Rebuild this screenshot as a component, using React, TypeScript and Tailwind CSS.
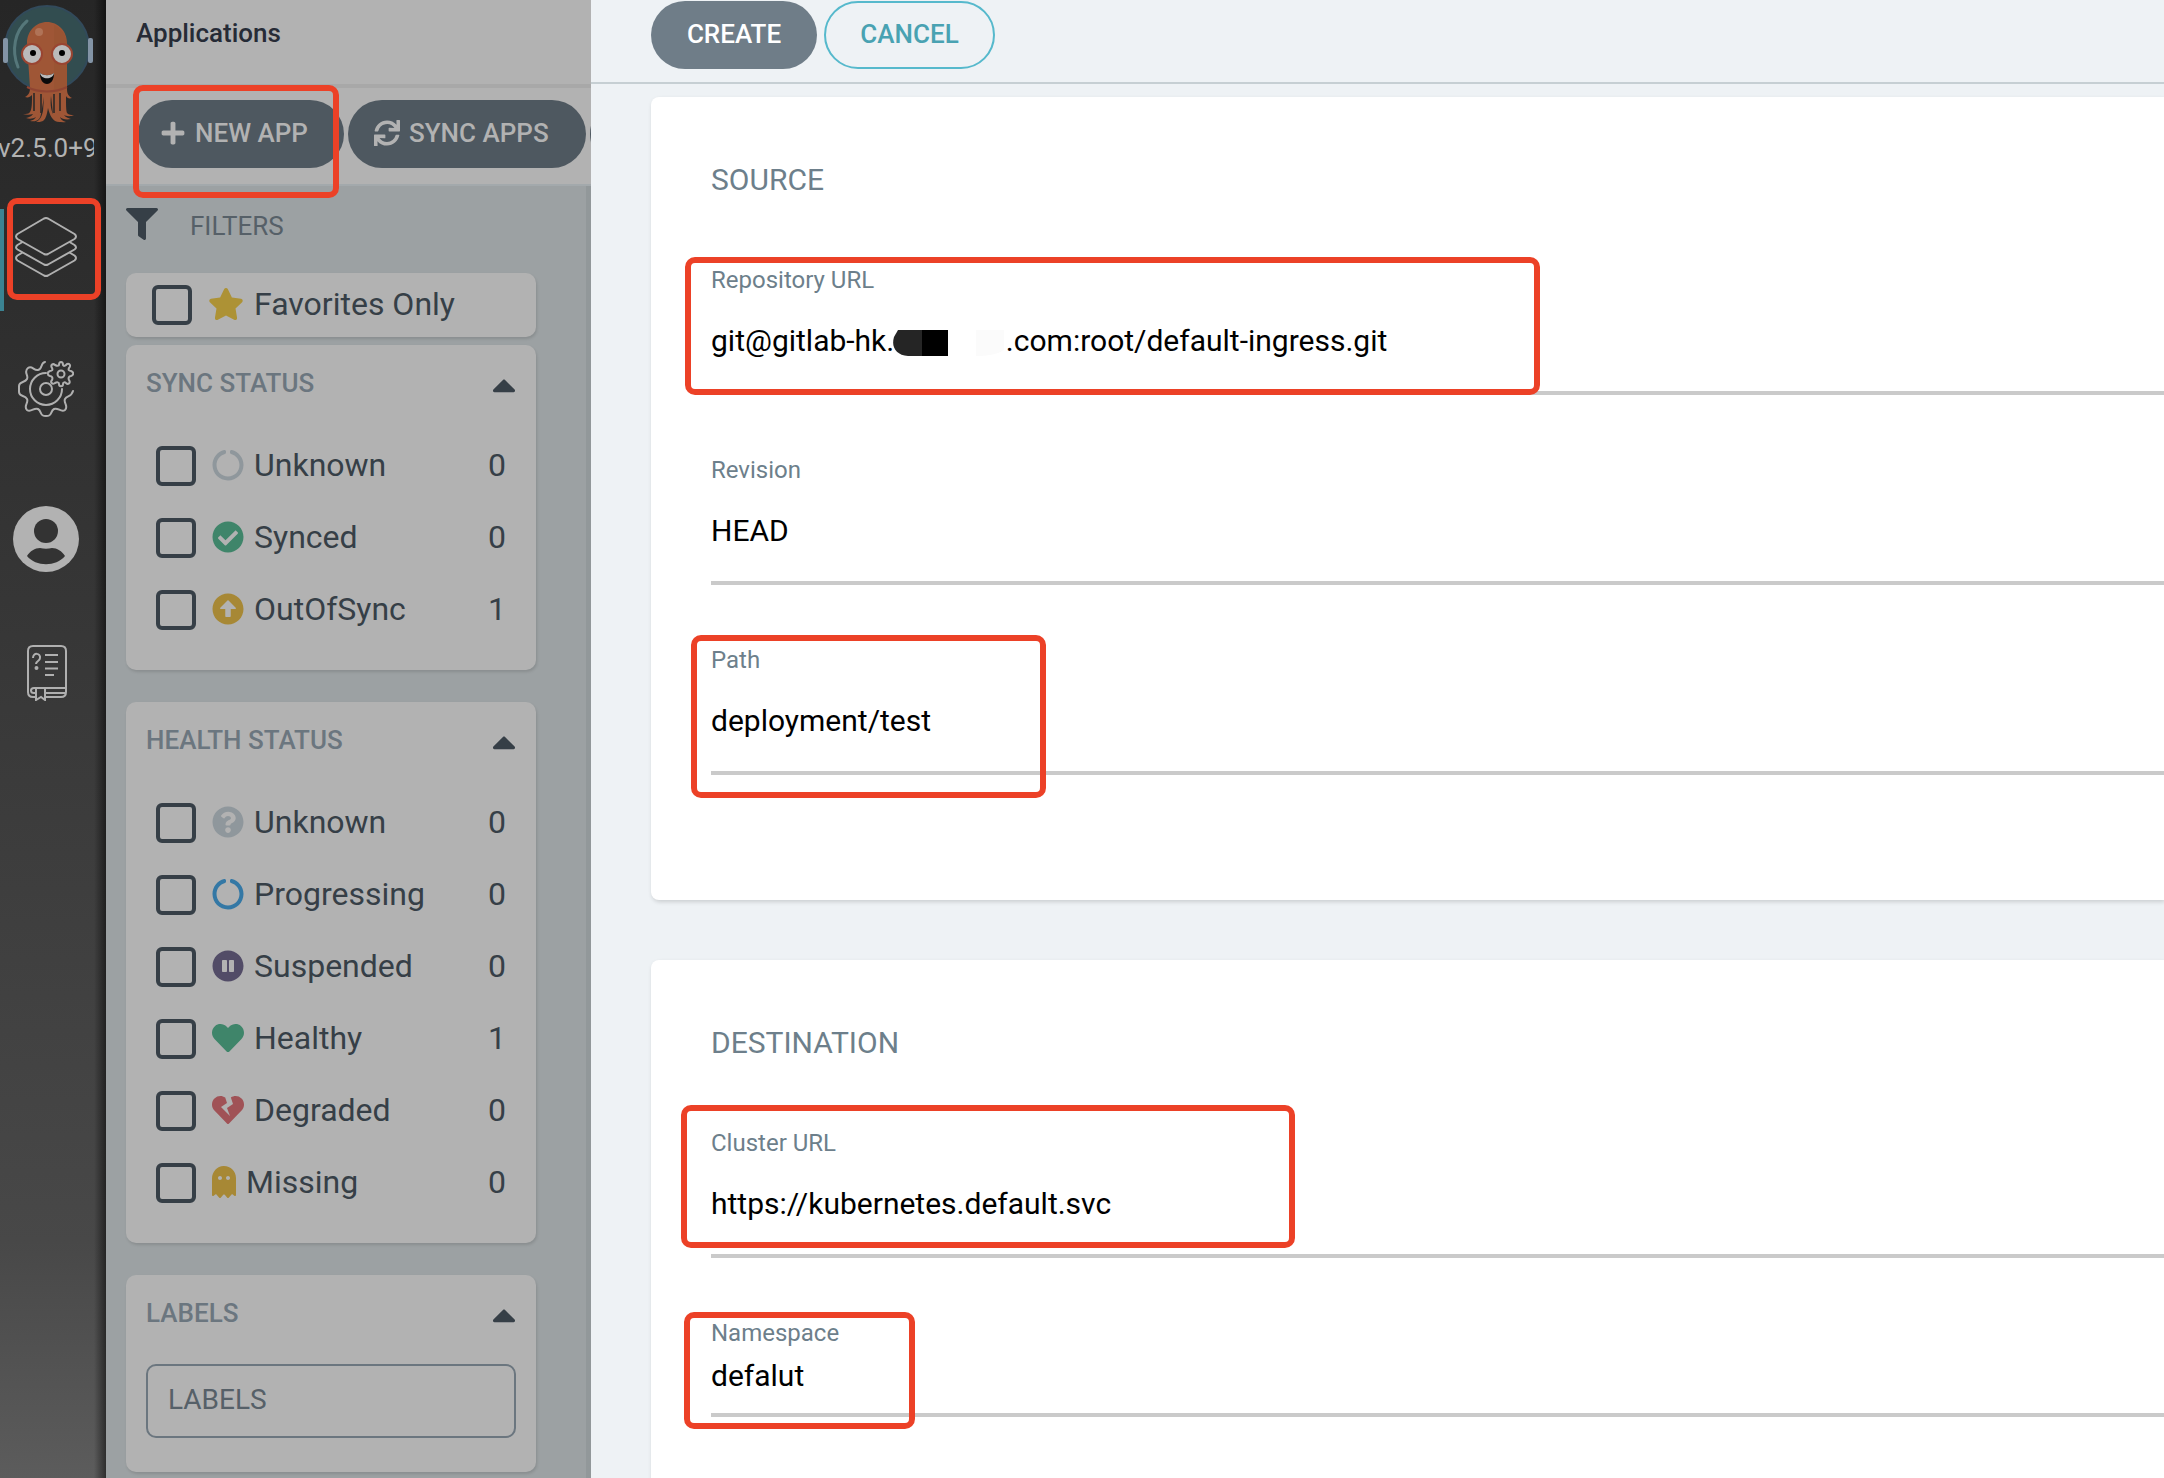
import { useState } from 'react';
import type { ReactNode } from 'react';
import {
    FaArrowAltCircleUp,
    FaCaretUp,
    FaCheckCircle,
    FaCircleNotch,
    FaFilter,
    FaGhost,
    FaHeart,
    FaHeartBroken,
    FaPauseCircle,
    FaPlus,
    FaQuestionCircle,
    FaStar,
    FaSync,
} from 'react-icons/fa';

interface FilterItem {
    name: string;
    count: number;
    icon: ReactNode;
}

const SYNC_ITEMS: FilterItem[] = [
    { name: 'Unknown', count: 0, icon: <FaCircleNotch className="text-[#8f979c]" /> },
    { name: 'Synced', count: 0, icon: <FaCheckCircle className="text-[#3f856a]" /> },
    { name: 'OutOfSync', count: 1, icon: <FaArrowAltCircleUp className="text-[#a78835]" /> },
];

const HEALTH_ITEMS: FilterItem[] = [
    { name: 'Unknown', count: 0, icon: <FaQuestionCircle className="text-[#8f979c]" /> },
    { name: 'Progressing', count: 0, icon: <FaCircleNotch className="text-[#3478a5]" /> },
    { name: 'Suspended', count: 0, icon: <FaPauseCircle className="text-[#524c67]" /> },
    { name: 'Healthy', count: 1, icon: <FaHeart className="text-[#3f856a]" /> },
    { name: 'Degraded', count: 0, icon: <FaHeartBroken className="text-[#a05256]" /> },
    { name: 'Missing', count: 0, icon: <FaGhost className="w-6 text-[#a78835]" /> },
];

const REPO_URL = `git@gitlab-hk.${'\u00a0'.repeat(15)}.com:root/default-ingress.git`;

function Mark({ className }: { className: string }) {
    return <span aria-hidden="true" className={`pointer-events-none absolute z-10 rounded-[10px] border-6 border-[#ec4127] ${className}`} />;
}

function Logo() {
    return (
        <svg viewBox="0 0 94 126" className="h-[126px] w-[94px]" aria-hidden="true">
            <circle cx="47" cy="48" r="42" fill="#324d50" stroke="#324a5b" strokeWidth="2" />
            <rect x="3" y="38" width="5" height="25" rx="2" fill="#8394a6" />
            <rect x="88" y="38" width="5" height="25" rx="2" fill="#8394a6" />
            <path d="M27 21C15 31 11 50 18 67" fill="none" stroke="#55777a" strokeWidth="3" strokeLinecap="round" />
            <path
                d="M27 43c0-12 9-21 20-21s20 9 20 21v46c0 4 1 7 5 9-3 1-5 0-6-2 0 8 0 14 1 17 2 2 4 2 7 2-4 2-8 1-10 0 2 3 5 3 7 4-5 1-9 0-11-2 1 3 3 4 6 5-8 1-12-2-13-8l-2-18c-1 9 0 16 4 21 1 2 3 4 6 5-8 1-11-6-13-14-1 6-2 11-5 13-2 1-5 1-7 1 4-2 6-6 7-11l1-14-3 17c-1 6-4 8-11 7 3-1 5-2 6-4-3 2-7 2-10 1 3-1 5-1 7-4-3 1-7 1-10 0 3 0 6 0 7-2 2-3 2-9 2-17-2 2-4 3-7 2 4-2 5-5 5-9z"
                fill="#9f5636"
            />
            <path d="M54 25c7 4 13 10 13 19v45h-13z" fill="#93502f" opacity="0.35" />
            <path d="M27 87c12 6 28 6 40 0" fill="none" stroke="#8f4432" strokeWidth="2" />
            <path d="M34 93v18M41 94v19M54 94v19M60 93v18" stroke="#262626" strokeWidth="1.500" />
            <circle cx="39" cy="32" r="4" fill="#b07357" />
            <circle cx="32" cy="54" r="10" fill="#bababa" stroke="#9a4532" strokeWidth="2" />
            <circle cx="62" cy="54" r="10" fill="#bababa" stroke="#9a4532" strokeWidth="2" />
            <circle cx="33" cy="53" r="3" fill="#000" />
            <circle cx="62" cy="53" r="3" fill="#000" />
            <path d="M40 73c4 3 10 3 14 0 0 7-3 11-7 11s-7-4-7-11z" fill="#0a0a0a" />
            <path d="M40 73c4 3 10 3 14 0-1 7-13 7-14 0z" fill="#bababa" />
        </svg>
    );
}

function LayersIcon() {
    return (
        <svg viewBox="0 0 62 60" className="h-[60px] w-[62px]" fill="none" stroke="#b0b0b0" strokeWidth="2" strokeLinejoin="round" aria-hidden="true">
            <path d="M29 1.500q2-1 4 0L59.500 17q3 2.500 0 5L33 37q-2 1-4 0L2.500 22q-3-2.500 0-5z" />
            <path d="M7.500 25 2.500 28q-3 2.500 0 4.500L29 47.500q2 1 4 0L59.500 32.500q3-2 0-4.500L54.500 25" />
            <path d="M7.500 35.500 2.500 38.500q-3 2.500 0 5L29 58.500q2 1 4 0L59.500 43.500q3-2.500 0-5L54.500 35.500" />
        </svg>
    );
}

function GearsIcon() {
    return (
        <svg viewBox="0 0 56 56" className="h-14 w-14" fill="none" stroke="#b0b0b0" strokeWidth="2" strokeLinecap="round" strokeLinejoin="round" aria-hidden="true">
            <circle cx="28" cy="28" r="6" />
            <path d="M28 12a16 16 0 1 0 16 16" />
            <path d="M27 1c-5 1-2 7-7 8-4 1-6-5-10-2-5 4 1 7-1 11s-8 2-8 7v6c0 5 6 3 8 7s-4 7 0 11c4 3 7-3 11-1s1 7 8 7 4-5 8-7 7 4 11 1c4-4-2-7 0-11s6-1 8-8" />
            <circle cx="43" cy="13" r="3.500" />
            <path d="M41 4c0-4 4-4 4 0 1 2 3 0 4-1 3-1 4 2 2 4-1 2 0 3 2 3 3 1 3 4 0 5-2 0-3 2-2 4 2 3-1 5-3 3-1-1-3-1-3 1 0 3-4 3-4 0 0-2-2-2-4-1-3 2-5-1-3-3 1-2 0-4-2-4-3-1-3-4 0-5 2 0 3-1 2-3-2-3 1-5 3-3 2 1 4 1 4 0z" />
        </svg>
    );
}

function UserIcon() {
    return (
        <svg viewBox="0 0 66 66" className="h-[66px] w-[66px]" aria-hidden="true">
            <circle cx="33" cy="33" r="33" fill="#b2b2b2" />
            <circle cx="33" cy="25" r="12" fill="#333" />
            <path d="M14 50c3-5 8-8 13-8 4 1 8 1 12 0 5 0 10 3 13 8-9 11-29 11-38 0z" fill="#333" />
        </svg>
    );
}

function DocsIcon() {
    return (
        <svg viewBox="0 0 40 56" className="h-14 w-10" fill="none" stroke="#b0b0b0" strokeWidth="2" aria-hidden="true">
            <path d="M9 52H6q-5 0-5-5V6q0-5 5-5h28q5 0 5 5v41q0 5-5 5H19" />
            <path d="M39 43H7q-3 0-3 2.500T7 48h2M19 48h20" />
            <path d="M9 43v12l5-3 4 3V43" />
            <path d="M18 10h13M18 17h13M18 23.500h13M18 30h9" />
            <path d="M6 13c0-6 8-5 7 0 0 3-4 3-4 6" />
            <circle cx="9.500" cy="23" r="1" fill="#b0b0b0" />
        </svg>
    );
}

function Checkbox({ id }: { id: string }) {
    return <input id={id} type="checkbox" className="size-10 shrink-0 appearance-none rounded-md border-4 border-[#363f47] checked:bg-[#363f47]" />;
}

function FilterCard({ title, children }: { title: string; children: ReactNode }) {
    const [open, setOpen] = useState(true);
    return (
        <section className="mb-8 rounded-[10px] bg-[#b2b2b2] px-5 pt-[18px] shadow-[1px_2px_3px_rgba(0,0,0,0.12)]">
            <div className="flex h-10 items-center justify-between">
                <h2 className="text-[26px] font-medium text-[#6b767f]">{title}</h2>
                <button type="button" aria-label={`Toggle ${title}`} onClick={() => setOpen(!open)} className="pt-1 text-[38px] text-[#363f47]">
                    <FaCaretUp className="w-6" />
                </button>
            </div>
            {open && children}
        </section>
    );
}

function FilterList({ group, items }: { group: string; items: FilterItem[] }) {
    return (
        <ul className="px-[10px] pt-[27px] pb-6">
            {items.map(item => (
                <li key={item.name} className="flex h-[72px] items-center text-[32px] text-[#363f47]">
                    <Checkbox id={`${group}-${item.name}`} />
                    <label htmlFor={`${group}-${item.name}`} className="ml-4 flex flex-1 items-center gap-[10px] pb-0.5">
                        {item.icon}
                        {item.name}
                    </label>
                    <span className="pb-0.5">{item.count}</span>
                </li>
            ))}
        </ul>
    );
}

interface FieldProps {
    id: string;
    label: string;
    value: string;
    compact?: boolean;
    children?: ReactNode;
}

function Field({ id, label, value, compact, children }: FieldProps) {
    const [text, setText] = useState(value);
    return (
        <div className={`relative ${compact ? 'mb-10' : 'mb-[58px]'}`}>
            <label htmlFor={id} className="block text-2xl leading-[34px] text-[#6d7f8b]">{label}</label>
            <input
                id={id}
                value={text}
                onChange={e => setText(e.target.value)}
                className={`block w-full border-b-4 border-[#cacaca] text-[30px] text-black outline-none ${compact ? 'h-[67px] pb-3' : 'h-[98px] pb-2'}`}
            />
            {children}
        </div>
    );
}

export default function App() {
    return (
        <div className="flex h-screen overflow-hidden bg-[#9ca1a3] font-[Roboto,sans-serif] text-[#363f47]">
            <nav className="relative flex w-[106px] shrink-0 flex-col bg-linear-to-b from-[#262626] via-[#484848] via-84% to-[#5c5c5c]">
                <Logo />
                <div className="-ml-0.5 w-24 overflow-hidden text-[26px] leading-11 whitespace-nowrap text-[#b2b2b2]">v2.5.0+9</div>
                <a href="#applications" aria-label="Applications" className="relative mt-[39px] flex h-[102px] items-start border-l-4 border-[#3b8392] pt-2 pl-[11px]">
                    <LayersIcon />
                    <Mark className="-top-[11px] left-[3px] h-[102px] w-[94px]" />
                </a>
                <a href="#settings" aria-label="Settings" className="mt-[50px] ml-[18px]"><GearsIcon /></a>
                <a href="#user" aria-label="User info" className="mt-[89px] ml-[13px]"><UserIcon /></a>
                <a href="#docs" aria-label="Documentation" className="mt-[73px] ml-[27px]"><DocsIcon /></a>
                <div className="absolute inset-y-0 right-0 w-3 bg-linear-to-r from-transparent to-black/50" />
            </nav>

            <main className="flex w-[485px] shrink-0 flex-col overflow-hidden">
                <header className="flex h-22 shrink-0 items-start border-b-4 border-[#a8a8a8] bg-[#b2b2b2] pt-[11px] pl-[30px]">
                    <h1 className="text-[26px] leading-11 font-medium text-[#262b36]">Applications</h1>
                </header>
                <div className="relative flex h-[98px] shrink-0 gap-1 border-b-2 border-[#a3a9ac] bg-[#b2b2b2] pt-3 pl-8">
                    <button type="button" className="flex h-17 w-[206px] shrink-0 items-center gap-[9px] rounded-full bg-[#4e5860] pb-0.5 pl-[22px] text-[26px] font-medium text-[#b2b2b2]">
                        <FaPlus />
                        NEW APP
                    </button>
                    <button type="button" className="flex h-17 w-[238px] shrink-0 items-center gap-[9px] rounded-full bg-[#4e5860] pb-0.5 pl-[26px] text-[26px] font-medium text-[#b2b2b2]">
                        <FaSync />
                        SYNC APPS
                    </button>
                    <button type="button" aria-label="Refresh apps" className="h-17 w-[238px] shrink-0 rounded-full bg-[#4e5860]" />
                    <Mark className="-top-[3px] left-[27px] h-[113px] w-[206px]" />
                </div>
                <aside className="flex-1 border-r-5 border-[#92989a] pr-[50px] pl-5">
                    <div className="flex h-[87px] items-start gap-8 pt-[22px] text-[26px] leading-9 text-[#566068]">
                        <FaFilter className="size-8 text-[#363f47]" />
                        FILTERS
                    </div>
                    <div className="mb-2 flex h-16 items-center rounded-[10px] bg-[#b2b2b2] pl-[26px] text-[32px] shadow-[1px_2px_3px_rgba(0,0,0,0.12)]">
                        <Checkbox id="favorites" />
                        <label htmlFor="favorites" className="ml-4 flex items-center gap-[10px] pb-0.5">
                            <FaStar className="size-9 text-[#ad9235]" />
                            Favorites Only
                        </label>
                    </div>
                    <FilterCard title="SYNC STATUS"><FilterList group="sync" items={SYNC_ITEMS} /></FilterCard>
                    <FilterCard title="HEALTH STATUS"><FilterList group="health" items={HEALTH_ITEMS} /></FilterCard>
                    <FilterCard title="LABELS">
                        <div className="pt-[31px] pb-[34px]">
                            <input
                                type="text"
                                aria-label="Labels"
                                placeholder="LABELS"
                                className="block h-[74px] w-full rounded-[10px] border-2 border-[#6b767f] px-5 pb-1 text-[28px] outline-none placeholder:text-[#566068]"
                            />
                        </div>
                    </FilterCard>
                </aside>
            </main>

            <form onSubmit={e => e.preventDefault()} className="flex min-w-0 flex-1 flex-col overflow-hidden bg-[#eef2f5]">
                <div className="flex h-[84px] shrink-0 items-start gap-[7px] border-b-2 border-[#c6cfd3] pt-px pl-15">
                    <button type="submit" className="h-17 w-[166px] rounded-full bg-[#6f7d88] pb-0.5 text-[26px] font-medium text-white">CREATE</button>
                    <button type="button" className="h-17 w-[171px] rounded-full border-2 border-[#56b9cc] pb-0.5 text-[26px] font-medium text-[#49a2b2]">CANCEL</button>
                </div>
                <div className="pt-[13px] pl-15">
                    <section className="mb-15 rounded-l-lg bg-white pt-[60px] pb-[67px] pl-15 shadow-[1px_2px_4px_rgba(0,0,0,0.15)]">
                        <h2 className="mb-[60px] text-[30px] leading-[46px] text-[#6d7f8b]">SOURCE</h2>
                        <Field id="repo" label="Repository URL" value={REPO_URL}>
                            <svg viewBox="0 0 120 28" className="absolute top-[66px] left-[181px] h-7 w-[120px]" aria-hidden="true">
                                <path d="M6 1h24v26H16C4 26-1 18 2 8z" fill="#252525" />
                                <path d="M30 1h26v26H30z" fill="#000" />
                                <path d="M84 1h28v20q-9 6-28 6z" fill="#fbfbfb" />
                            </svg>
                            <Mark className="-top-[6px] -left-[26px] h-[138px] w-[855px]" />
                        </Field>
                        <Field id="revision" label="Revision" value="HEAD" />
                        <Field id="path" label="Path" value="deployment/test">
                            <Mark className="-top-[8px] -left-[20px] h-[163px] w-[355px]" />
                        </Field>
                    </section>
                    <section className="rounded-l-lg bg-white pt-[60px] pb-[67px] pl-15 shadow-[1px_2px_4px_rgba(0,0,0,0.15)]">
                        <h2 className="mb-[60px] text-[30px] leading-[46px] text-[#6d7f8b]">DESTINATION</h2>
                        <Field id="cluster" label="Cluster URL" value="https://kubernetes.default.svc">
                            <Mark className="-top-[21px] -left-[30px] h-[143px] w-[614px]" />
                        </Field>
                        <Field id="namespace" label="Namespace" value="defalut" compact>
                            <Mark className="-top-[4px] -left-[27px] h-[117px] w-[231px]" />
                        </Field>
                    </section>
                </div>
            </form>
        </div>
    );
}
